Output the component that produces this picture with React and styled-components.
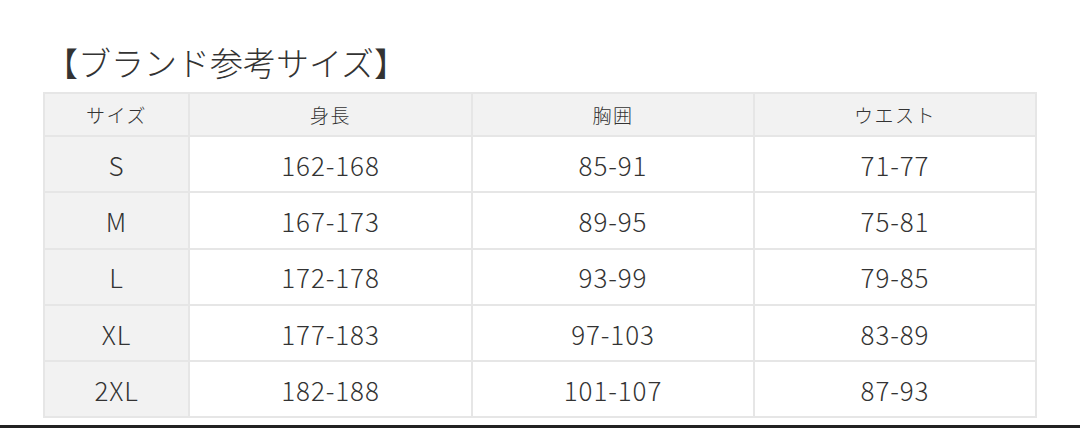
import React from "react";
import styled, { createGlobalStyle } from "styled-components";

const Global = createGlobalStyle`
  html, body { margin: 0; padding: 0; background: #fff; }
  body { font-family: "Noto Sans CJK JP", "Noto Sans", sans-serif; color: #333; }
`;

const Page = styled.div`
  width: 1080px;
  height: 428px;
  box-sizing: border-box;
  padding: 38px 43px 0 43px;
  border-bottom: 3px solid #222;
  overflow: hidden;
`;

const Title = styled.h2`
  margin: 0 0 6px 2px;
  font-size: 33px;
  font-weight: 300;
  line-height: 48px;
  color: #333;
`;

const Table = styled.table`
  border-collapse: collapse;
  width: 992px;
  table-layout: fixed;
`;

const Cell = styled.td`
  border: 2px solid #e6e6e6;
  text-align: center;
  padding: 0;
  background: ${(p) => (p.$shade ? "#f2f2f2" : "#fff")};
  height: ${(p) => (p.$head ? "41px" : "54.3px")};
  font-size: ${(p) => (p.$head ? "19px" : "26px")};
  letter-spacing: ${(p) => (p.$head ? "1.5px" : "0.9px")};
  color: #333;
  font-weight: 300;
`;

const cols = [145, 283, 282, 282];
const head = ["サイズ", "身長", "胸囲", "ウエスト"];
const rows = [
  ["S", "162-168", "85-91", "71-77"],
  ["M", "167-173", "89-95", "75-81"],
  ["L", "172-178", "93-99", "79-85"],
  ["XL", "177-183", "97-103", "83-89"],
  ["2XL", "182-188", "101-107", "87-93"],
];

export default function App() {
  return (
    <>
      <Global />
      <Page>
        <Title>【ブランド参考サイズ】</Title>
        <Table>
          <colgroup>
            {cols.map((w, i) => (
              <col key={i} style={{ width: w }} />
            ))}
          </colgroup>
          <thead>
            <tr>
              {head.map((h) => (
                <Cell as="th" key={h} $head $shade>
                  {h}
                </Cell>
              ))}
            </tr>
          </thead>
          <tbody>
            {rows.map((r) => (
              <tr key={r[0]}>
                {r.map((c, i) => (
                  <Cell key={i} $shade={i === 0}>
                    {c}
                  </Cell>
                ))}
              </tr>
            ))}
          </tbody>
        </Table>
      </Page>
    </>
  );
}
